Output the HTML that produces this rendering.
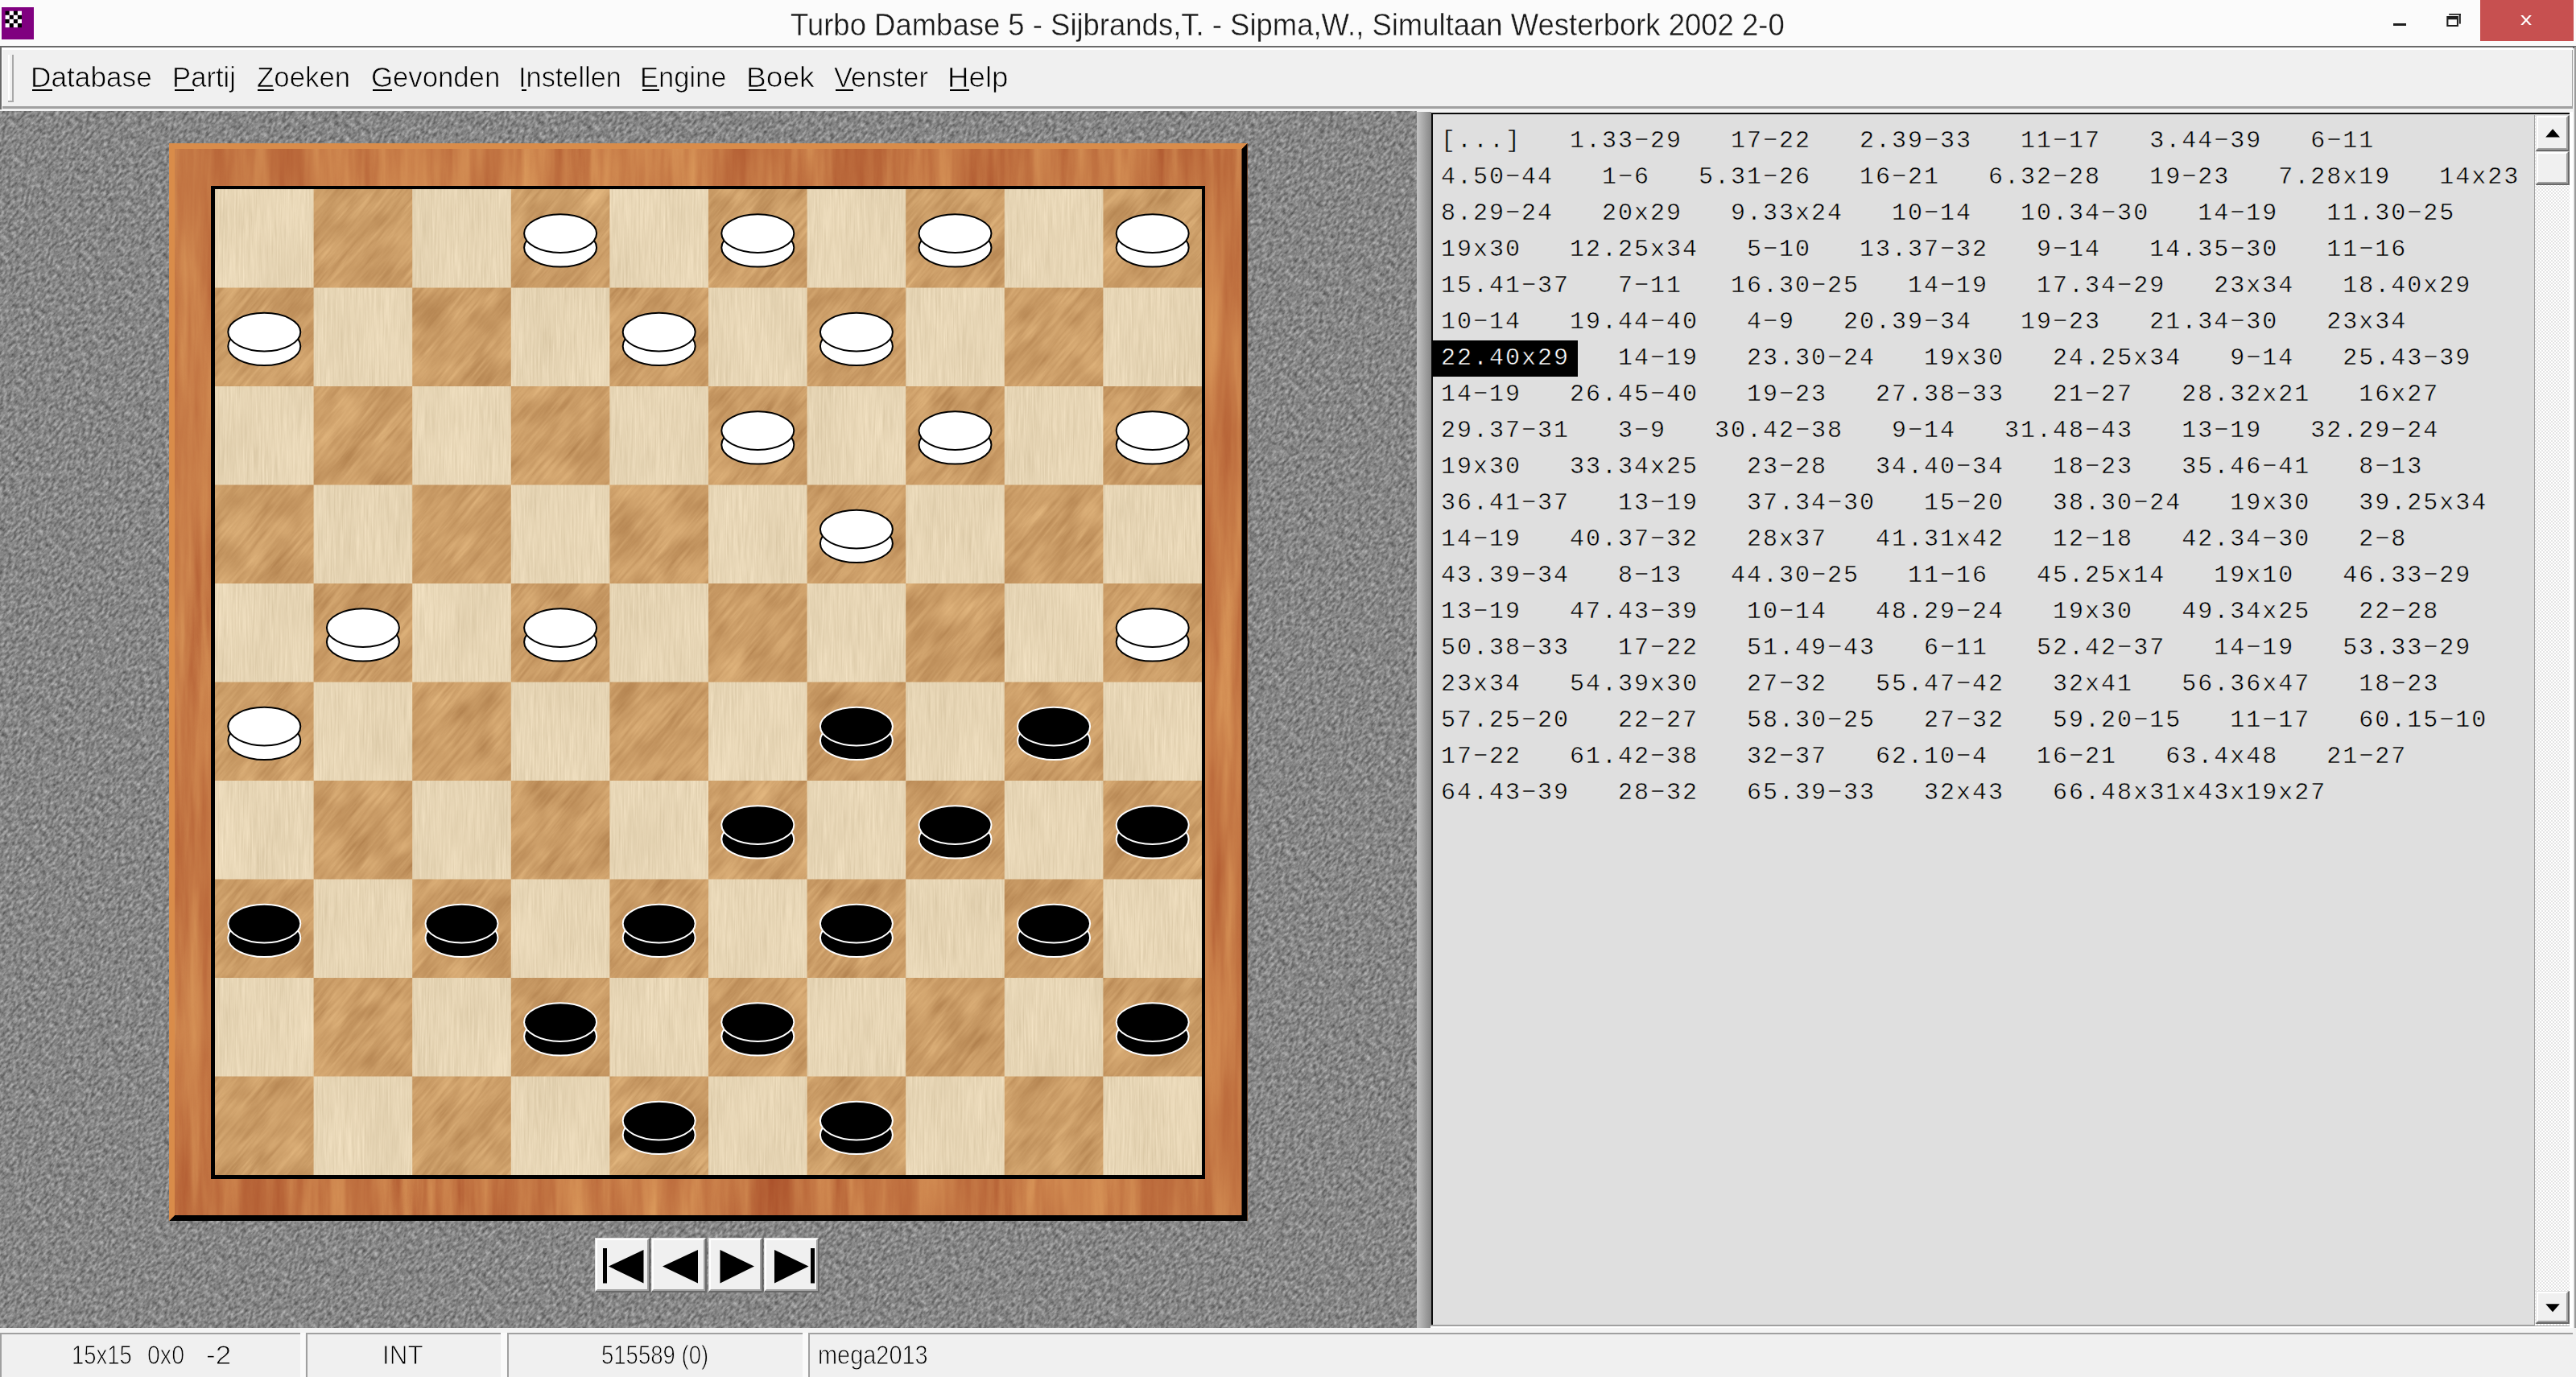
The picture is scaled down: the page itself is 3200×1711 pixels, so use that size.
<!DOCTYPE html>
<html><head><meta charset="utf-8">
<style>
html,body{margin:0;padding:0;}
body{width:3200px;height:1711px;overflow:hidden;position:relative;background:#f0f0f0;font-family:"Liberation Sans",sans-serif;}
.a{position:absolute;}
.menu{position:absolute;top:73px;font-size:34px;line-height:44px;color:#000;white-space:pre;}
.u{position:absolute;height:2px;background:#000;top:111px;}
.mv{position:absolute;left:1790px;height:45px;line-height:45px;font-family:"Liberation Mono",monospace;font-size:30px;letter-spacing:2px;color:#000;white-space:pre;-webkit-text-stroke:0.5px #dfdfdf;}
.hl{color:#fff;-webkit-text-stroke:0.5px #000;}
.st{position:absolute;top:1664px;font-size:31px;line-height:40px;color:#000;white-space:pre;}
.btn{position:absolute;top:1538px;width:68px;height:67px;background:#f0f0f0;box-shadow:inset 2px 2px 0 #fff, inset -2px -2px 0 #808080;}
</style></head><body>
<!-- TITLE BAR -->
<div class="a" style="left:0;top:0;width:3200px;height:58px;background:#fbfbfb"></div>
<div class="a" style="left:0;top:57.3px;width:3200px;height:2.4px;background:#6a6a6a"></div>
<div class="a" style="left:2px;top:9px;width:40px;height:40px;background:#800080"></div>
<svg class="a" style="left:0;top:0" width="50" height="50">
<g fill="#000"><rect x="6.6" y="13.7" width="5.1" height="5.1"/><rect x="16.8" y="13.7" width="5.1" height="5.1"/>
<rect x="11.7" y="18.8" width="5.1" height="5.1"/><rect x="21.9" y="18.8" width="5.1" height="5.1"/>
<rect x="6.6" y="23.9" width="5.1" height="5.1"/><rect x="16.8" y="23.9" width="5.1" height="5.1"/>
<rect x="11.7" y="29" width="5.1" height="5.1"/><rect x="21.9" y="29" width="5.1" height="5.1"/></g>
<g fill="#fff"><rect x="11.7" y="13.7" width="5.1" height="5.1"/><rect x="21.9" y="13.7" width="5.1" height="5.1"/>
<rect x="6.6" y="18.8" width="5.1" height="5.1"/><rect x="16.8" y="18.8" width="5.1" height="5.1"/>
<rect x="11.7" y="23.9" width="5.1" height="5.1"/><rect x="21.9" y="23.9" width="5.1" height="5.1"/>
<rect x="6.6" y="29" width="5.1" height="5.1"/><rect x="16.8" y="29" width="5.1" height="5.1"/></g>
</svg>
<div class="a" style="left:981.55px;top:11.81px;font-family:'Liberation Sans';font-size:38.37px;line-height:38.37px;color:#1a1a1a;white-space:pre;transform:scaleX(0.951);transform-origin:0 0;-webkit-text-stroke:0.4px #fbfbfb">Turbo Dambase 5 - Sijbrands,T. - Sipma,W., Simultaan Westerbork 2002 2-0</div>
<div class="a" style="left:2972.8px;top:28.6px;width:16px;height:3.4px;background:#1e1e1e"></div>
<svg class="a" style="left:0;top:0" width="3200" height="58">
<rect x="3042.2" y="17" width="14.6" height="1.7" fill="#1e1e1e"/>
<rect x="3054.8" y="17" width="2" height="12.6" fill="#1e1e1e"/>
<path d="M3039.3,19.9 h14.6 v13.1 h-14.6 Z M3041.4,24.3 v6.7 h10.5 v-6.7 Z" fill="#1e1e1e" fill-rule="evenodd"/>
</svg>
<div class="a" style="left:3081px;top:0;width:116px;height:51px;background:#c75050"></div>
<svg class="a" style="left:0;top:0" width="3200" height="58">
<path d="M3131.2,18.9 L3134.1,18.9 L3144.9,31 L3142,31 Z M3142,18.9 L3144.9,18.9 L3134.1,31 L3131.2,31 Z" fill="#fff"/>
</svg>

<!-- MENU BAR -->
<div class="a" style="left:0;top:59px;width:3196px;height:76px;background:#f0f0f0;box-shadow:inset 3px 3px 0 #fff, inset -1px -3px 0 #a0a0a0"></div>
<div class="a" style="left:0;top:58px;width:1.5px;height:1653px;background:#6a6a6a"></div>
<div class="a" style="left:9.7px;top:68px;width:2.2px;height:59px;background:#fff"></div>
<div class="a" style="left:15.2px;top:68px;width:2.2px;height:59.2px;background:#a8a8a8"></div>
<div class="a" style="left:9.7px;top:125px;width:7.7px;height:2.2px;background:#a8a8a8"></div>
<div class="a" style="left:38.17px;top:78.76px;font-family:'Liberation Sans';font-size:34.88px;line-height:34.88px;color:#000;white-space:pre;transform:scaleX(1.0097);transform-origin:0 0;-webkit-text-stroke:0.7px #f0f0f0">Database</div><div class="a" style="left:214.42px;top:78.76px;font-family:'Liberation Sans';font-size:34.88px;line-height:34.88px;color:#000;white-space:pre;transform:scaleX(0.9946);transform-origin:0 0;-webkit-text-stroke:0.7px #f0f0f0">Partij</div><div class="a" style="left:319.0px;top:78.76px;font-family:'Liberation Sans';font-size:34.88px;line-height:34.88px;color:#000;white-space:pre;transform:scaleX(0.9982);transform-origin:0 0;-webkit-text-stroke:0.7px #f0f0f0">Zoeken</div><div class="a" style="left:460.71px;top:78.76px;font-family:'Liberation Sans';font-size:34.88px;line-height:34.88px;color:#000;white-space:pre;transform:scaleX(0.9955);transform-origin:0 0;-webkit-text-stroke:0.7px #f0f0f0">Gevonden</div><div class="a" style="left:643.56px;top:78.76px;font-family:'Liberation Sans';font-size:34.88px;line-height:34.88px;color:#000;white-space:pre;transform:scaleX(0.9846);transform-origin:0 0;-webkit-text-stroke:0.7px #f0f0f0">Instellen</div><div class="a" style="left:794.73px;top:78.76px;font-family:'Liberation Sans';font-size:34.88px;line-height:34.88px;color:#000;white-space:pre;transform:scaleX(0.9894);transform-origin:0 0;-webkit-text-stroke:0.7px #f0f0f0">Engine</div><div class="a" style="left:927.3px;top:78.76px;font-family:'Liberation Sans';font-size:34.88px;line-height:34.88px;color:#000;white-space:pre;transform:scaleX(1.0653);transform-origin:0 0;-webkit-text-stroke:0.7px #f0f0f0">Boek</div><div class="a" style="left:1035.81px;top:78.76px;font-family:'Liberation Sans';font-size:34.88px;line-height:34.88px;color:#000;white-space:pre;transform:scaleX(0.9889);transform-origin:0 0;-webkit-text-stroke:0.7px #f0f0f0">Venster</div><div class="a" style="left:1177.34px;top:78.76px;font-family:'Liberation Sans';font-size:34.88px;line-height:34.88px;color:#000;white-space:pre;transform:scaleX(1.0522);transform-origin:0 0;-webkit-text-stroke:0.7px #f0f0f0">Help</div><div class="a" style="left:39.7px;top:110.6px;width:25.3px;height:2.2px;background:#000"></div><div class="a" style="left:217.4px;top:110.6px;width:23.3px;height:2.2px;background:#000"></div><div class="a" style="left:320px;top:110.6px;width:19.7px;height:2.2px;background:#000"></div><div class="a" style="left:462.7px;top:110.6px;width:24.3px;height:2.2px;background:#000"></div><div class="a" style="left:647.5px;top:110.6px;width:6.5px;height:2.2px;background:#000"></div><div class="a" style="left:797.7px;top:110.6px;width:21.3px;height:2.2px;background:#000"></div><div class="a" style="left:929.7px;top:110.6px;width:22.5px;height:2.2px;background:#000"></div><div class="a" style="left:1037.6px;top:110.6px;width:22.4px;height:2.2px;background:#000"></div><div class="a" style="left:1179.7px;top:110.6px;width:24.8px;height:2.2px;background:#000"></div>
<div class="a" style="left:0;top:135.5px;width:3196px;height:3px;background:#f4f4f4"></div>

<!-- LEFT TEXTURED AREA -->
<svg class="a" style="left:0;top:138px" width="1760" height="1512">
<defs>
<filter id="felt" x="-20%" y="-20%" width="140%" height="140%" color-interpolation-filters="sRGB">
<feTurbulence type="fractalNoise" baseFrequency="0.3 0.17" numOctaves="3" seed="3"/>
<feColorMatrix type="matrix" values="0.55 0 0 0 0.25  0.55 0 0 0 0.25  0.55 0 0 0 0.25  0 0 0 0 1"/>
</filter>
<clipPath id="feltc"><rect width="1760" height="1512"/></clipPath>
</defs>
<g clip-path="url(#feltc)"><g transform="rotate(42 880 756)"><rect x="-500" y="-600" width="2760" height="2712" filter="url(#felt)"/></g></g>
</svg>

<!-- BOARD -->
<svg class="a" style="left:0;top:0" width="1600" height="1600">
<defs>
<filter id="fr" x="0" y="0" width="100%" height="100%" color-interpolation-filters="sRGB">
<feTurbulence type="fractalNoise" baseFrequency="0.06 0.005" numOctaves="4" seed="5" result="a"/>
<feTurbulence type="fractalNoise" baseFrequency="0.015 0.003" numOctaves="2" seed="21" result="b"/>
<feComposite in="a" in2="b" operator="arithmetic" k1="0" k2="0.45" k3="0.55" k4="0"/>
<feColorMatrix type="matrix" values="0.3 0 0 0 0.62  0.45 0 0 0 0.245  0.3 0 0 0 0.12  0 0 0 0 1"/>
</filter>
<filter id="lt" x="0" y="0" width="100%" height="100%" color-interpolation-filters="sRGB">
<feTurbulence type="fractalNoise" baseFrequency="0.45 0.02" numOctaves="3" seed="9" result="a"/>
<feTurbulence type="fractalNoise" baseFrequency="0.02 0.01" numOctaves="1" seed="41" result="b"/>
<feComposite in="a" in2="b" operator="arithmetic" k1="0" k2="0.65" k3="0.35" k4="0"/>
<feColorMatrix type="matrix" values="0.16 0 0 0 0.825  0.17 0 0 0 0.752  0.19 0 0 0 0.615  0 0 0 0 1"/>
</filter>
<filter id="dk" x="0" y="0" width="100%" height="100%" color-interpolation-filters="sRGB">
<feTurbulence type="fractalNoise" baseFrequency="0.22 0.018" numOctaves="4" seed="11" result="a"/>
<feTurbulence type="fractalNoise" baseFrequency="0.03 0.02" numOctaves="2" seed="31" result="b"/>
<feComposite in="a" in2="b" operator="arithmetic" k1="0" k2="0.42" k3="0.58" k4="0"/>
<feColorMatrix type="matrix" values="0.3 0 0 0 0.645  0.33 0 0 0 0.45  0.3 0 0 0 0.255  0 0 0 0 1"/>
</filter>
<clipPath id="dkc"><path d="M389.6,235.0h122.6v122.5h-122.6zM634.8,235.0h122.6v122.5h-122.6zM880.0,235.0h122.6v122.5h-122.6zM1125.2,235.0h122.6v122.5h-122.6zM1370.4,235.0h122.6v122.5h-122.6zM267.0,357.5h122.6v122.5h-122.6zM512.2,357.5h122.6v122.5h-122.6zM757.4,357.5h122.6v122.5h-122.6zM1002.6,357.5h122.6v122.5h-122.6zM1247.8,357.5h122.6v122.5h-122.6zM389.6,480.0h122.6v122.5h-122.6zM634.8,480.0h122.6v122.5h-122.6zM880.0,480.0h122.6v122.5h-122.6zM1125.2,480.0h122.6v122.5h-122.6zM1370.4,480.0h122.6v122.5h-122.6zM267.0,602.5h122.6v122.5h-122.6zM512.2,602.5h122.6v122.5h-122.6zM757.4,602.5h122.6v122.5h-122.6zM1002.6,602.5h122.6v122.5h-122.6zM1247.8,602.5h122.6v122.5h-122.6zM389.6,725.0h122.6v122.5h-122.6zM634.8,725.0h122.6v122.5h-122.6zM880.0,725.0h122.6v122.5h-122.6zM1125.2,725.0h122.6v122.5h-122.6zM1370.4,725.0h122.6v122.5h-122.6zM267.0,847.5h122.6v122.5h-122.6zM512.2,847.5h122.6v122.5h-122.6zM757.4,847.5h122.6v122.5h-122.6zM1002.6,847.5h122.6v122.5h-122.6zM1247.8,847.5h122.6v122.5h-122.6zM389.6,970.0h122.6v122.5h-122.6zM634.8,970.0h122.6v122.5h-122.6zM880.0,970.0h122.6v122.5h-122.6zM1125.2,970.0h122.6v122.5h-122.6zM1370.4,970.0h122.6v122.5h-122.6zM267.0,1092.5h122.6v122.5h-122.6zM512.2,1092.5h122.6v122.5h-122.6zM757.4,1092.5h122.6v122.5h-122.6zM1002.6,1092.5h122.6v122.5h-122.6zM1247.8,1092.5h122.6v122.5h-122.6zM389.6,1215.0h122.6v122.5h-122.6zM634.8,1215.0h122.6v122.5h-122.6zM880.0,1215.0h122.6v122.5h-122.6zM1125.2,1215.0h122.6v122.5h-122.6zM1370.4,1215.0h122.6v122.5h-122.6zM267.0,1337.5h122.6v122.5h-122.6zM512.2,1337.5h122.6v122.5h-122.6zM757.4,1337.5h122.6v122.5h-122.6zM1002.6,1337.5h122.6v122.5h-122.6zM1247.8,1337.5h122.6v122.5h-122.6z"/></clipPath>
<clipPath id="frc"><path d="M210,178h1340v1339h-1340z"/></clipPath>
</defs>
<!-- frame -->
<g clip-path="url(#frc)"><rect x="210" y="178" width="1340" height="1339" filter="url(#fr)"/></g>
<path d="M1549.5,178 L1549.5,1517 L210,1517 L217,1510 L1542.5,1510 L1542.5,185 Z" fill="#000"/>
<path d="M210,178 L1549.5,178 L1542.5,185 L217,185 L217,1510 L210,1517 Z" fill="#d98c4a"/>
<rect x="262" y="231" width="1235" height="1234" fill="#000"/>
<g clip-path="url(#lt0)"></g>
<rect x="267" y="235" width="1226" height="1225" filter="url(#lt)"/>
<g clip-path="url(#dkc)"><g transform="rotate(40 880 848)"><rect x="-300" y="-300" width="2400" height="2400" filter="url(#dk)"/></g></g>
<ellipse cx="696.1" cy="307.7" rx="45.0" ry="23.8" fill="#ffffff" stroke="#000000" stroke-width="2.0"/><ellipse cx="696.1" cy="290.1" rx="45.0" ry="23.8" fill="#ffffff" stroke="#000000" stroke-width="2.0"/><ellipse cx="941.3" cy="307.7" rx="45.0" ry="23.8" fill="#ffffff" stroke="#000000" stroke-width="2.0"/><ellipse cx="941.3" cy="290.1" rx="45.0" ry="23.8" fill="#ffffff" stroke="#000000" stroke-width="2.0"/><ellipse cx="1186.5" cy="307.7" rx="45.0" ry="23.8" fill="#ffffff" stroke="#000000" stroke-width="2.0"/><ellipse cx="1186.5" cy="290.1" rx="45.0" ry="23.8" fill="#ffffff" stroke="#000000" stroke-width="2.0"/><ellipse cx="1431.7" cy="307.7" rx="45.0" ry="23.8" fill="#ffffff" stroke="#000000" stroke-width="2.0"/><ellipse cx="1431.7" cy="290.1" rx="45.0" ry="23.8" fill="#ffffff" stroke="#000000" stroke-width="2.0"/><ellipse cx="328.3" cy="430.2" rx="45.0" ry="23.8" fill="#ffffff" stroke="#000000" stroke-width="2.0"/><ellipse cx="328.3" cy="412.6" rx="45.0" ry="23.8" fill="#ffffff" stroke="#000000" stroke-width="2.0"/><ellipse cx="818.7" cy="430.2" rx="45.0" ry="23.8" fill="#ffffff" stroke="#000000" stroke-width="2.0"/><ellipse cx="818.7" cy="412.6" rx="45.0" ry="23.8" fill="#ffffff" stroke="#000000" stroke-width="2.0"/><ellipse cx="1063.9" cy="430.2" rx="45.0" ry="23.8" fill="#ffffff" stroke="#000000" stroke-width="2.0"/><ellipse cx="1063.9" cy="412.6" rx="45.0" ry="23.8" fill="#ffffff" stroke="#000000" stroke-width="2.0"/><ellipse cx="941.3" cy="552.7" rx="45.0" ry="23.8" fill="#ffffff" stroke="#000000" stroke-width="2.0"/><ellipse cx="941.3" cy="535.1" rx="45.0" ry="23.8" fill="#ffffff" stroke="#000000" stroke-width="2.0"/><ellipse cx="1186.5" cy="552.7" rx="45.0" ry="23.8" fill="#ffffff" stroke="#000000" stroke-width="2.0"/><ellipse cx="1186.5" cy="535.1" rx="45.0" ry="23.8" fill="#ffffff" stroke="#000000" stroke-width="2.0"/><ellipse cx="1431.7" cy="552.7" rx="45.0" ry="23.8" fill="#ffffff" stroke="#000000" stroke-width="2.0"/><ellipse cx="1431.7" cy="535.1" rx="45.0" ry="23.8" fill="#ffffff" stroke="#000000" stroke-width="2.0"/><ellipse cx="1063.9" cy="675.2" rx="45.0" ry="23.8" fill="#ffffff" stroke="#000000" stroke-width="2.0"/><ellipse cx="1063.9" cy="657.6" rx="45.0" ry="23.8" fill="#ffffff" stroke="#000000" stroke-width="2.0"/><ellipse cx="450.9" cy="797.7" rx="45.0" ry="23.8" fill="#ffffff" stroke="#000000" stroke-width="2.0"/><ellipse cx="450.9" cy="780.1" rx="45.0" ry="23.8" fill="#ffffff" stroke="#000000" stroke-width="2.0"/><ellipse cx="696.1" cy="797.7" rx="45.0" ry="23.8" fill="#ffffff" stroke="#000000" stroke-width="2.0"/><ellipse cx="696.1" cy="780.1" rx="45.0" ry="23.8" fill="#ffffff" stroke="#000000" stroke-width="2.0"/><ellipse cx="1431.7" cy="797.7" rx="45.0" ry="23.8" fill="#ffffff" stroke="#000000" stroke-width="2.0"/><ellipse cx="1431.7" cy="780.1" rx="45.0" ry="23.8" fill="#ffffff" stroke="#000000" stroke-width="2.0"/><ellipse cx="328.3" cy="920.2" rx="45.0" ry="23.8" fill="#ffffff" stroke="#000000" stroke-width="2.0"/><ellipse cx="328.3" cy="902.6" rx="45.0" ry="23.8" fill="#ffffff" stroke="#000000" stroke-width="2.0"/><ellipse cx="1063.9" cy="920.2" rx="45.0" ry="23.8" fill="#000000" stroke="#ffffff" stroke-width="2.0"/><ellipse cx="1063.9" cy="902.6" rx="45.0" ry="23.8" fill="#000000" stroke="#ffffff" stroke-width="2.0"/><ellipse cx="1309.1" cy="920.2" rx="45.0" ry="23.8" fill="#000000" stroke="#ffffff" stroke-width="2.0"/><ellipse cx="1309.1" cy="902.6" rx="45.0" ry="23.8" fill="#000000" stroke="#ffffff" stroke-width="2.0"/><ellipse cx="941.3" cy="1042.7" rx="45.0" ry="23.8" fill="#000000" stroke="#ffffff" stroke-width="2.0"/><ellipse cx="941.3" cy="1025.1" rx="45.0" ry="23.8" fill="#000000" stroke="#ffffff" stroke-width="2.0"/><ellipse cx="1186.5" cy="1042.7" rx="45.0" ry="23.8" fill="#000000" stroke="#ffffff" stroke-width="2.0"/><ellipse cx="1186.5" cy="1025.1" rx="45.0" ry="23.8" fill="#000000" stroke="#ffffff" stroke-width="2.0"/><ellipse cx="1431.7" cy="1042.7" rx="45.0" ry="23.8" fill="#000000" stroke="#ffffff" stroke-width="2.0"/><ellipse cx="1431.7" cy="1025.1" rx="45.0" ry="23.8" fill="#000000" stroke="#ffffff" stroke-width="2.0"/><ellipse cx="328.3" cy="1165.2" rx="45.0" ry="23.8" fill="#000000" stroke="#ffffff" stroke-width="2.0"/><ellipse cx="328.3" cy="1147.6" rx="45.0" ry="23.8" fill="#000000" stroke="#ffffff" stroke-width="2.0"/><ellipse cx="573.5" cy="1165.2" rx="45.0" ry="23.8" fill="#000000" stroke="#ffffff" stroke-width="2.0"/><ellipse cx="573.5" cy="1147.6" rx="45.0" ry="23.8" fill="#000000" stroke="#ffffff" stroke-width="2.0"/><ellipse cx="818.7" cy="1165.2" rx="45.0" ry="23.8" fill="#000000" stroke="#ffffff" stroke-width="2.0"/><ellipse cx="818.7" cy="1147.6" rx="45.0" ry="23.8" fill="#000000" stroke="#ffffff" stroke-width="2.0"/><ellipse cx="1063.9" cy="1165.2" rx="45.0" ry="23.8" fill="#000000" stroke="#ffffff" stroke-width="2.0"/><ellipse cx="1063.9" cy="1147.6" rx="45.0" ry="23.8" fill="#000000" stroke="#ffffff" stroke-width="2.0"/><ellipse cx="1309.1" cy="1165.2" rx="45.0" ry="23.8" fill="#000000" stroke="#ffffff" stroke-width="2.0"/><ellipse cx="1309.1" cy="1147.6" rx="45.0" ry="23.8" fill="#000000" stroke="#ffffff" stroke-width="2.0"/><ellipse cx="696.1" cy="1287.7" rx="45.0" ry="23.8" fill="#000000" stroke="#ffffff" stroke-width="2.0"/><ellipse cx="696.1" cy="1270.1" rx="45.0" ry="23.8" fill="#000000" stroke="#ffffff" stroke-width="2.0"/><ellipse cx="941.3" cy="1287.7" rx="45.0" ry="23.8" fill="#000000" stroke="#ffffff" stroke-width="2.0"/><ellipse cx="941.3" cy="1270.1" rx="45.0" ry="23.8" fill="#000000" stroke="#ffffff" stroke-width="2.0"/><ellipse cx="1431.7" cy="1287.7" rx="45.0" ry="23.8" fill="#000000" stroke="#ffffff" stroke-width="2.0"/><ellipse cx="1431.7" cy="1270.1" rx="45.0" ry="23.8" fill="#000000" stroke="#ffffff" stroke-width="2.0"/><ellipse cx="818.7" cy="1410.2" rx="45.0" ry="23.8" fill="#000000" stroke="#ffffff" stroke-width="2.0"/><ellipse cx="818.7" cy="1392.6" rx="45.0" ry="23.8" fill="#000000" stroke="#ffffff" stroke-width="2.0"/><ellipse cx="1063.9" cy="1410.2" rx="45.0" ry="23.8" fill="#000000" stroke="#ffffff" stroke-width="2.0"/><ellipse cx="1063.9" cy="1392.6" rx="45.0" ry="23.8" fill="#000000" stroke="#ffffff" stroke-width="2.0"/>
</svg>

<!-- NAV BUTTONS -->
<div class="a" style="left:739.3px;top:1538px;width:68.5px;height:67.8px;box-sizing:border-box;border-style:solid;border-width:1.5px 2.2px 2.2px 1.5px;border-color:#e3e3e3 #696969 #696969 #e3e3e3"><div style="position:absolute;inset:0;box-sizing:border-box;border-style:solid;border-width:2.5px;border-color:#fff #a0a0a0 #a0a0a0 #fff;background:#f0f0f0"></div></div>
<div class="a" style="left:809.4px;top:1538px;width:68.5px;height:67.8px;box-sizing:border-box;border-style:solid;border-width:1.5px 2.2px 2.2px 1.5px;border-color:#e3e3e3 #696969 #696969 #e3e3e3"><div style="position:absolute;inset:0;box-sizing:border-box;border-style:solid;border-width:2.5px;border-color:#fff #a0a0a0 #a0a0a0 #fff;background:#f0f0f0"></div></div>
<div class="a" style="left:879.5px;top:1538px;width:68.5px;height:67.8px;box-sizing:border-box;border-style:solid;border-width:1.5px 2.2px 2.2px 1.5px;border-color:#e3e3e3 #696969 #696969 #e3e3e3"><div style="position:absolute;inset:0;box-sizing:border-box;border-style:solid;border-width:2.5px;border-color:#fff #a0a0a0 #a0a0a0 #fff;background:#f0f0f0"></div></div>
<div class="a" style="left:949.2px;top:1538px;width:68.5px;height:67.8px;box-sizing:border-box;border-style:solid;border-width:1.5px 2.2px 2.2px 1.5px;border-color:#e3e3e3 #696969 #696969 #e3e3e3"><div style="position:absolute;inset:0;box-sizing:border-box;border-style:solid;border-width:2.5px;border-color:#fff #a0a0a0 #a0a0a0 #fff;background:#f0f0f0"></div></div>
<svg class="a" style="left:720px;top:1520px" width="320" height="100">
<rect x="29" y="31" width="5" height="43.5"/>
<path d="M36,53.5 L79.5,33 V74.5 Z"/>
<path d="M103,53.5 L147,33 V74.5 Z"/>
<path d="M174.5,33 L217,53.5 L174.5,74.5 Z"/>
<path d="M242,33 L284.5,53.5 L242,74.5 Z"/>
<rect x="287" y="31" width="5" height="43.5"/>
</svg>

<!-- SPLITTER -->
<div class="a" style="left:1759.5px;top:138.5px;width:18.5px;height:1511.5px;background:linear-gradient(90deg,#c4c4c4,#868686)"></div>

<!-- MOVE LIST PANEL -->
<div class="a" style="left:1777.5px;top:140.3px;width:1414.5px;height:1506px;background:#dfdfdf;border-left:2.8px solid #0a0a0a;border-top:2.7px solid #0a0a0a;box-sizing:border-box"></div>
<div class="a" style="left:1777px;top:1646px;width:1415px;height:2px;background:#a0a0a0"></div>
<div class="a" style="left:1777px;top:1648px;width:1419px;height:7px;background:#fff"></div>
<div class="a" style="left:3192px;top:139px;width:4px;height:1516px;background:#fff"></div>
<div class="a" style="left:3198px;top:58px;width:2px;height:1653px;background:#9a9a9a"></div>
<div class="a" style="left:1779px;top:423px;width:181px;height:44.5px;background:#000"></div>
<div class="mv" style="top:153.0px">[...]   1.33−29   17−22   2.39−33   11−17   3.44−39   6−11</div>
<div class="mv" style="top:198.0px">4.50−44   1−6   5.31−26   16−21   6.32−28   19−23   7.28x19   14x23</div>
<div class="mv" style="top:243.0px">8.29−24   20x29   9.33x24   10−14   10.34−30   14−19   11.30−25</div>
<div class="mv" style="top:288.0px">19x30   12.25x34   5−10   13.37−32   9−14   14.35−30   11−16</div>
<div class="mv" style="top:333.0px">15.41−37   7−11   16.30−25   14−19   17.34−29   23x34   18.40x29</div>
<div class="mv" style="top:378.0px">10−14   19.44−40   4−9   20.39−34   19−23   21.34−30   23x34</div>
<div class="mv" style="top:423.0px"><span class="hl">22.40x29</span>   14−19   23.30−24   19x30   24.25x34   9−14   25.43−39</div>
<div class="mv" style="top:468.0px">14−19   26.45−40   19−23   27.38−33   21−27   28.32x21   16x27</div>
<div class="mv" style="top:513.0px">29.37−31   3−9   30.42−38   9−14   31.48−43   13−19   32.29−24</div>
<div class="mv" style="top:558.0px">19x30   33.34x25   23−28   34.40−34   18−23   35.46−41   8−13</div>
<div class="mv" style="top:603.0px">36.41−37   13−19   37.34−30   15−20   38.30−24   19x30   39.25x34</div>
<div class="mv" style="top:648.0px">14−19   40.37−32   28x37   41.31x42   12−18   42.34−30   2−8</div>
<div class="mv" style="top:693.0px">43.39−34   8−13   44.30−25   11−16   45.25x14   19x10   46.33−29</div>
<div class="mv" style="top:738.0px">13−19   47.43−39   10−14   48.29−24   19x30   49.34x25   22−28</div>
<div class="mv" style="top:783.0px">50.38−33   17−22   51.49−43   6−11   52.42−37   14−19   53.33−29</div>
<div class="mv" style="top:828.0px">23x34   54.39x30   27−32   55.47−42   32x41   56.36x47   18−23</div>
<div class="mv" style="top:873.0px">57.25−20   22−27   58.30−25   27−32   59.20−15   11−17   60.15−10</div>
<div class="mv" style="top:918.0px">17−22   61.42−38   32−37   62.10−4   16−21   63.4x48   21−27</div>
<div class="mv" style="top:963.0px">64.43−39   28−32   65.39−33   32x43   66.48x31x43x19x27</div>
<!-- SCROLLBAR -->
<div class="a" style="left:3148px;top:143px;width:44px;height:1503.5px;background-color:#f4f4f4;background-image:repeating-conic-gradient(#ffffff 0% 25%, #e4e4e4 0% 50%);background-size:4px 4px;border-left:1.5px solid #a0a0a0;box-sizing:border-box"></div>
<div class="a" style="left:3149.5px;top:143.4px;width:42.3px;height:44.2px;box-sizing:border-box;border-style:solid;border-width:1.5px 2.2px 2.2px 1.5px;border-color:#e3e3e3 #696969 #696969 #e3e3e3"><div style="position:absolute;inset:0;box-sizing:border-box;border-style:solid;border-width:2.5px 2.5px 2.5px 2.5px;border-color:#fff #a0a0a0 #a0a0a0 #fff;background:#f0f0f0"></div></div>
<div class="a" style="left:3149.5px;top:187.6px;width:42.3px;height:42.3px;box-sizing:border-box;border-style:solid;border-width:1.5px 2.2px 2.2px 1.5px;border-color:#e3e3e3 #696969 #696969 #e3e3e3"><div style="position:absolute;inset:0;box-sizing:border-box;border-style:solid;border-width:2.5px 2.5px 2.5px 2.5px;border-color:#fff #a0a0a0 #a0a0a0 #fff;background:#f0f0f0"></div></div>
<div class="a" style="left:3149.5px;top:1603.5px;width:42.3px;height:41.5px;box-sizing:border-box;border-style:solid;border-width:1.5px 2.2px 2.2px 1.5px;border-color:#e3e3e3 #696969 #696969 #e3e3e3"><div style="position:absolute;inset:0;box-sizing:border-box;border-style:solid;border-width:2.5px 2.5px 2.5px 2.5px;border-color:#fff #a0a0a0 #a0a0a0 #fff;background:#f0f0f0"></div></div>
<svg class="a" style="left:3150px;top:144px" width="42" height="1502">
<path d="M12.2,26.4 L21.1,16.2 L30,26.4 Z"/>
<path d="M12.3,1476.3 L29.8,1476.3 L21.05,1486.3 Z"/>
</svg>

<!-- STATUS BAR -->
<div class="a" style="left:0;top:1650px;width:3200px;height:61px;background:#f0f0f0"></div>
<div class="a" style="left:0;top:1650px;width:3198px;height:5.5px;background:#f4f4f4"></div>
<div class="a" style="left:0;top:1655.5px;width:373px;height:56px;border-left:2px solid #a0a0a0;border-top:2px solid #a0a0a0;box-sizing:border-box"></div>
<div class="a" style="left:373px;top:1655.5px;width:6px;height:56px;background:#fafafa"></div>
<div class="a" style="left:379.5px;top:1655.5px;width:243px;height:56px;border-left:2px solid #a0a0a0;border-top:2px solid #a0a0a0;box-sizing:border-box"></div>
<div class="a" style="left:622px;top:1655.5px;width:8px;height:56px;background:#fafafa"></div>
<div class="a" style="left:630px;top:1655.5px;width:367px;height:56px;border-left:2px solid #a0a0a0;border-top:2px solid #a0a0a0;box-sizing:border-box"></div>
<div class="a" style="left:997px;top:1655.5px;width:7px;height:56px;background:#fafafa"></div>
<div class="a" style="left:1004px;top:1655.5px;width:2192px;height:56px;border-left:2px solid #a0a0a0;border-top:2px solid #a0a0a0;box-sizing:border-box"></div>
<div class="a" style="left:89.13px;top:1666.89px;font-family:'Liberation Sans';font-size:33.43px;line-height:33.43px;color:#000;white-space:pre;transform:scaleX(0.8221);transform-origin:0 0;-webkit-text-stroke:0.9px #f0f0f0">15x15</div><div class="a" style="left:183.09px;top:1666.89px;font-family:'Liberation Sans';font-size:33.43px;line-height:33.43px;color:#000;white-space:pre;transform:scaleX(0.854);transform-origin:0 0;-webkit-text-stroke:0.9px #f0f0f0">0x0</div><div class="a" style="left:255.71px;top:1666.89px;font-family:'Liberation Sans';font-size:33.43px;line-height:33.43px;color:#000;white-space:pre;transform:scaleX(1.0462);transform-origin:0 0;-webkit-text-stroke:0.9px #f0f0f0">-2</div><div class="a" style="left:475.04px;top:1666.89px;font-family:'Liberation Sans';font-size:33.43px;line-height:33.43px;color:#000;white-space:pre;transform:scaleX(0.9388);transform-origin:0 0;-webkit-text-stroke:0.9px #f0f0f0">INT</div><div class="a" style="left:746.95px;top:1666.89px;font-family:'Liberation Sans';font-size:33.43px;line-height:33.43px;color:#000;white-space:pre;transform:scaleX(0.8236);transform-origin:0 0;-webkit-text-stroke:0.9px #f0f0f0">515589 (0)</div><div class="a" style="left:1016.4px;top:1666.89px;font-family:'Liberation Sans';font-size:33.43px;line-height:33.43px;color:#000;white-space:pre;transform:scaleX(0.8654);transform-origin:0 0;-webkit-text-stroke:0.9px #f0f0f0">mega2013</div>
</body></html>
